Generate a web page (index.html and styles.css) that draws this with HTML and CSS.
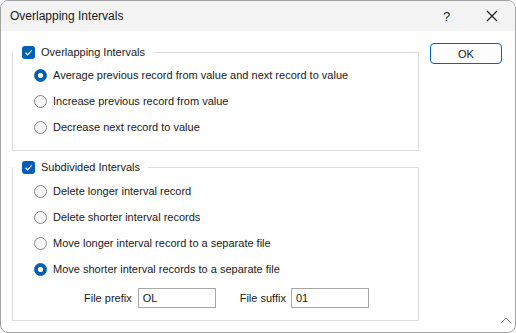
FILE: index.html
```html
<!DOCTYPE html>
<html lang="en">
<head>
    <meta charset="UTF-8">
    <meta name="viewport" content="width=device-width, initial-scale=1.0">
    <title>Overlapping Intervals</title>
    <link rel="stylesheet" href="styles.css">
</head>
<body>
    <div class="window">
        <div class="titlebar">
            <span class="title">Overlapping Intervals</span>
            <span class="help">?</span>
            <span class="close">
                <svg width="12" height="12" viewBox="0 0 12 12"><path d="M1 1 L11 11 M11 1 L1 11" stroke="#1a1a1a" stroke-width="1.1" fill="none"/></svg>
            </span>
        </div>

        <div class="content">
            <div class="groups">
                <fieldset class="group">
                    <legend>
                        <span class="check"><svg width="13" height="13" viewBox="0 0 13 13"><path d="M3.5 6.8 L5.6 8.8 L9.6 4.4" stroke="#fff" stroke-width="1.2" fill="none"/></svg></span>
                        Overlapping Intervals
                    </legend>
                    <div class="option"><span class="radio on"></span>Average previous record from value and next record to value</div>
                    <div class="option"><span class="radio"></span>Increase previous record from value</div>
                    <div class="option"><span class="radio"></span>Decrease next record to value</div>
                </fieldset>

                <fieldset class="group group-second">
                    <legend>
                        <span class="check"><svg width="13" height="13" viewBox="0 0 13 13"><path d="M3.5 6.8 L5.6 8.8 L9.6 4.4" stroke="#fff" stroke-width="1.2" fill="none"/></svg></span>
                        Subdivided Intervals
                    </legend>
                    <div class="option"><span class="radio"></span>Delete longer interval record</div>
                    <div class="option"><span class="radio"></span>Delete shorter interval records</div>
                    <div class="option"><span class="radio"></span>Move longer interval record to a separate file</div>
                    <div class="option"><span class="radio on"></span>Move shorter interval records to a separate file</div>
                    <div class="file-row">
                        <label class="file-label">File prefix</label>
                        <input type="text" class="field" value="OL">
                        <label class="file-label suffix">File suffix</label>
                        <input type="text" class="field" value="01">
                    </div>
                </fieldset>
            </div>

            <div class="actions">
                <button class="btn">OK</button>
            </div>
        </div>

        <svg class="grip" width="12" height="7" viewBox="0 0 12 7"><path d="M1 6 L6 1 L11 6" stroke="#8a8a8a" stroke-width="1" fill="none"/></svg>
    </div>
</body>
</html>
```

FILE: styles.css
```css
body {
    margin: 0;
    background: #ffffff;
    font-family: "Liberation Sans", Arial, sans-serif;
    color: #1a1a1a;
}

.window {
    position: relative;
    width: 516px;
    height: 333px;
    box-sizing: border-box;
    border: 1px solid #a3a3a3;
    border-radius: 8px;
    background: #ffffff;
    overflow: hidden;
}

.titlebar {
    height: 30px;
    display: flex;
    align-items: center;
    background: #f3f3f3;
    font-size: 12px;
}

.title {
    margin-left: 9px;
    flex: 1;
}

.help {
    width: 12px;
    margin-right: 31px;
    font-size: 13px;
}

.close {
    display: flex;
    margin-right: 17px;
}

.content {
    display: flex;
    padding: 12px 0 0 11px;
    font-size: 11px;
}

.groups {
    width: 407px;
    margin-top: 2px;
}

.group {
    margin: 0;
    padding: 3px 0 10px 0;
    min-width: 0;
    border: 1px solid #dcdcdc;
}

.group-second {
    margin-top: 9px;
    padding: 4px 0 8px 0;
}

.group legend {
    display: flex;
    align-items: center;
    height: 14px;
    line-height: 14px;
    padding: 0 8px 0 9px;
}

.check {
    display: flex;
    width: 13px;
    height: 13px;
    margin-right: 6px;
    background: #005fb8;
    border-radius: 3px;
}

.option {
    display: flex;
    align-items: center;
    height: 26px;
    padding-left: 21px;
}

.radio {
    width: 13px;
    height: 13px;
    box-sizing: border-box;
    margin-right: 6px;
    border: 1px solid #868686;
    border-radius: 50%;
    background: #f7f7f7;
}

.radio.on {
    border-color: #005fb8;
    background: radial-gradient(circle, #ffffff 2.4px, #005fb8 3px);
}

.file-row {
    display: flex;
    align-items: center;
    height: 28px;
    margin-top: 2px;
    padding-left: 71px;
}

.file-label {
    margin-right: 6px;
}

.file-label.suffix {
    margin-left: 24px;
    margin-right: 5px;
}

.field {
    width: 78px;
    height: 20px;
    box-sizing: border-box;
    border: 1px solid #a8a8a8;
    padding: 0 4px;
    font-family: "Liberation Sans", Arial, sans-serif;
    font-size: 11px;
    color: #1a1a1a;
    outline: none;
}

.actions {
    margin-left: 11px;
}

.btn {
    width: 72px;
    height: 21px;
    padding: 0;
    border: 1px solid #0067c0;
    border-radius: 4px;
    background: #fdfdfd;
    font-family: "Liberation Sans", Arial, sans-serif;
    font-size: 11px;
    color: #1a1a1a;
}

.grip {
    position: absolute;
    right: 3px;
    bottom: 8px;
}
```
